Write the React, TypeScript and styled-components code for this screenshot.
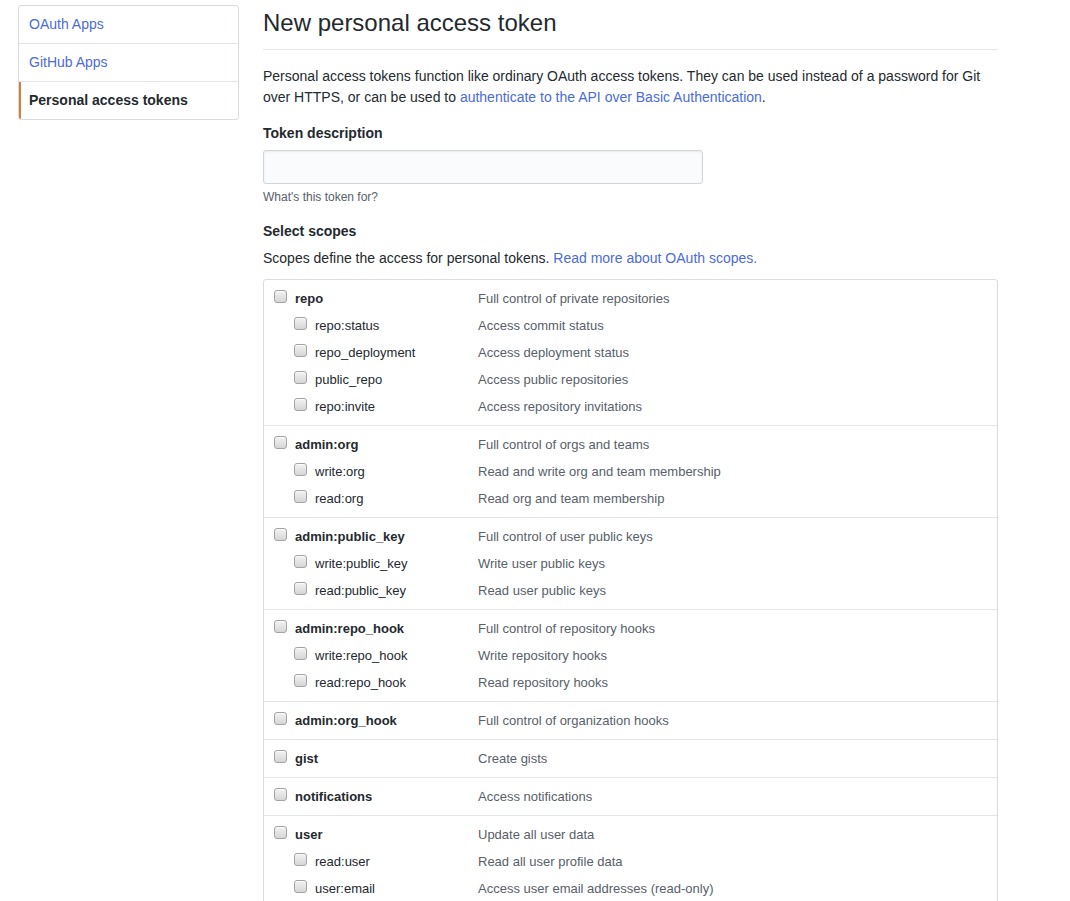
import React from 'react';
import styled, { createGlobalStyle } from 'styled-components';

const GlobalStyle = createGlobalStyle`
  body {
    margin: 0;
    background: #fff;
    font-family: 'Liberation Sans', Arial, sans-serif;
    font-size: 14px;
    line-height: 1.5;
    color: #24292e;
  }
`;

const LINK = '#4c6bd8';

const Page = styled.div`
  display: flex;
  align-items: flex-start;
  gap: 24px;
  padding: 5px 0 0 18px;
`;

const Menu = styled.nav`
  width: 221px;
  flex: none;
  border: 1px solid #d8dbe0;
  border-radius: 3px;
  overflow: hidden;
  box-sizing: border-box;
`;

const MenuItem = styled.a<{ $selected?: boolean }>`
  display: block;
  padding: 8px 10px;
  line-height: 21px;
  border-bottom: 1px solid #e1e4e8;
  color: ${(p) => (p.$selected ? '#24292e' : LINK)};
  font-weight: ${(p) => (p.$selected ? 700 : 400)};
  text-decoration: none;
  box-shadow: ${(p) => (p.$selected ? 'inset 2px 0 0 #d0803a' : 'none')};

  &:last-child {
    border-bottom: none;
  }
`;

const Main = styled.main`
  width: 735px;
  flex: none;
`;

const Subhead = styled.div`
  padding-bottom: 10px;
  margin-bottom: 16px;
  border-bottom: 1px solid #e1e4e8;
`;

const Heading = styled.h2`
  margin: 0;
  padding-top: 2px;
  font-size: 24px;
  font-weight: 400;
  line-height: 32px;
`;

const Lead = styled.p`
  margin: 0 0 15px;
  line-height: 21px;
`;

const Link = styled.a`
  color: ${LINK};
  text-decoration: none;
`;

const FieldLabel = styled.label`
  display: block;
  font-weight: 700;
  line-height: 21px;
  margin-bottom: 6px;
`;

const TextInput = styled.input`
  display: block;
  width: 440px;
  height: 34px;
  box-sizing: border-box;
  padding: 6px 8px;
  background: #fafbfc;
  border: 1px solid #d1d5da;
  border-radius: 3px;
  box-shadow: inset 0 1px 2px rgba(27, 31, 35, 0.075);
  font-family: inherit;
  font-size: 14px;
  outline: none;
`;

const Note = styled.p`
  margin: 4px 0 15px;
  font-size: 12px;
  line-height: 18px;
  color: #586069;
`;

const Hint = styled.p`
  margin: 0 0 10px;
  line-height: 21px;
`;

const ScopeBox = styled.div`
  border: 1px solid #dcdcdc;
  border-radius: 3px;
  font-size: 13px;
`;

const ScopeGroup = styled.div`
  padding: 5px 10px;
  border-bottom: 1px solid #e1e4e8;

  &:last-child {
    border-bottom: none;
  }
`;

const ScopeRow = styled.label<{ $child?: boolean }>`
  display: flex;
  align-items: center;
  height: 27px;
  padding-left: ${(p) => (p.$child ? 20 : 0)}px;
`;

const Box = styled.span`
  width: 13px;
  height: 13px;
  flex: none;
  box-sizing: border-box;
  margin: -4px 8px 0 0;
  border: 1px solid #a3a3a3;
  border-radius: 3px;
  background: linear-gradient(#f2f2f2, #d6d6d6);
  box-shadow: inset 0 1px 0 rgba(255, 255, 255, 0.7);
`;

const ScopeName = styled.span<{ $child?: boolean }>`
  width: ${(p) => (p.$child ? 163 : 183)}px;
  flex: none;
  font-weight: ${(p) => (p.$child ? 400 : 700)};
  color: #24292e;
`;

const ScopeDesc = styled.span`
  color: #586069;
`;

type Scope = { name: string; desc: string; children?: [string, string][] };

const scopes: Scope[] = [
  {
    name: 'repo',
    desc: 'Full control of private repositories',
    children: [
      ['repo:status', 'Access commit status'],
      ['repo_deployment', 'Access deployment status'],
      ['public_repo', 'Access public repositories'],
      ['repo:invite', 'Access repository invitations'],
    ],
  },
  {
    name: 'admin:org',
    desc: 'Full control of orgs and teams',
    children: [
      ['write:org', 'Read and write org and team membership'],
      ['read:org', 'Read org and team membership'],
    ],
  },
  {
    name: 'admin:public_key',
    desc: 'Full control of user public keys',
    children: [
      ['write:public_key', 'Write user public keys'],
      ['read:public_key', 'Read user public keys'],
    ],
  },
  {
    name: 'admin:repo_hook',
    desc: 'Full control of repository hooks',
    children: [
      ['write:repo_hook', 'Write repository hooks'],
      ['read:repo_hook', 'Read repository hooks'],
    ],
  },
  { name: 'admin:org_hook', desc: 'Full control of organization hooks' },
  { name: 'gist', desc: 'Create gists' },
  { name: 'notifications', desc: 'Access notifications' },
  {
    name: 'user',
    desc: 'Update all user data',
    children: [
      ['read:user', 'Read all user profile data'],
      ['user:email', 'Access user email addresses (read-only)'],
      ['user:follow', 'Follow and unfollow users'],
    ],
  },
];

const App = () => {
  return (
    <>
      <GlobalStyle />
      <Page>
        <Menu>
          <MenuItem href="#">OAuth Apps</MenuItem>
          <MenuItem href="#">GitHub Apps</MenuItem>
          <MenuItem href="#" $selected>
            Personal access tokens
          </MenuItem>
        </Menu>
        <Main>
          <Subhead>
            <Heading>New personal access token</Heading>
          </Subhead>
          <Lead>
            Personal access tokens function like ordinary OAuth access tokens. They can be used
            instead of a password for Git over HTTPS, or can be used to{' '}
            <Link href="#">authenticate to the API over Basic Authentication</Link>.
          </Lead>
          <FieldLabel htmlFor="token-desc">Token description</FieldLabel>
          <TextInput id="token-desc" type="text" />
          <Note>What's this token for?</Note>
          <FieldLabel as="div">Select scopes</FieldLabel>
          <Hint>
            Scopes define the access for personal tokens.{' '}
            <Link href="#">Read more about OAuth scopes.</Link>
          </Hint>
          <ScopeBox>
            {scopes.map((s) => (
              <ScopeGroup key={s.name}>
                <ScopeRow>
                  <Box />
                  <ScopeName>{s.name}</ScopeName>
                  <ScopeDesc>{s.desc}</ScopeDesc>
                </ScopeRow>
                {s.children?.map(([name, desc]) => (
                  <ScopeRow key={name} $child>
                    <Box />
                    <ScopeName $child>{name}</ScopeName>
                    <ScopeDesc>{desc}</ScopeDesc>
                  </ScopeRow>
                ))}
              </ScopeGroup>
            ))}
          </ScopeBox>
        </Main>
      </Page>
    </>
  );
};

export default App;
